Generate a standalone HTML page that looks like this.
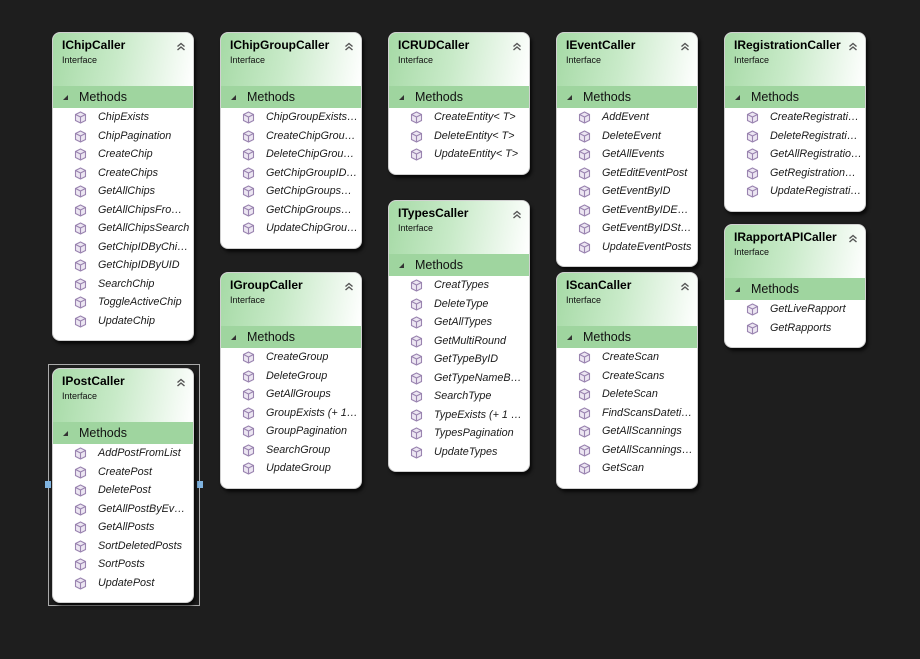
<!DOCTYPE html>
<html><head><meta charset="utf-8"><style>
body{margin:0;width:920px;height:659px;background:#1e1e1e;position:relative;overflow:hidden;font-family:"Liberation Sans",sans-serif}
.c{position:absolute;width:140px;background:#fff;border:1px solid #d0d0d0;border-radius:8px;box-shadow:2px 3px 3px rgba(0,0,0,.7);overflow:hidden;padding-bottom:10px}
.h{height:53px;background:linear-gradient(100deg,#a6daa6 0%,#c8eac8 45%,#ffffff 100%);position:relative}
.t{position:absolute;left:9px;top:5px;font-weight:bold;font-size:12px;color:#000;white-space:nowrap;width:110px;overflow:hidden;text-overflow:ellipsis}
.i{position:absolute;left:9px;top:22px;font-size:9px;color:#111}
.ch{position:absolute;right:7px;top:5px}
.m{height:22px;background:#9fd59f;font-size:12.5px;line-height:22px;color:#111;position:relative;padding-left:26px}
.m:before{content:"";position:absolute;left:10px;top:9px;border-left:5px solid transparent;border-bottom:5px solid #333}
.r{height:18.5px;line-height:18.5px;font-size:10.8px;font-style:italic;color:#1a1a1a;padding-left:45px;position:relative;white-space:nowrap;overflow:hidden;text-overflow:ellipsis;padding-right:3px}
.r svg{position:absolute;left:21px;top:3px}
.sel{position:absolute;left:48px;top:364px;width:150px;height:240px;border:1px solid #aaa}
.hd{position:absolute;width:6px;height:7px;background:#7fb3e0}
</style></head><body>
<div class="sel"></div>
<div class="hd" style="left:45px;top:481px"></div>
<div class="hd" style="left:197px;top:481px"></div>
<script>
const cube='<svg width="13" height="13" viewBox="0 0 13 13"><path d="M6.5 1L11.5 3.5V9.5L6.5 12L1.5 9.5V3.5Z" fill="#ece6f2" stroke="#9a84b0" stroke-width="1.1"/><path d="M1.5 3.5L6.5 6L11.5 3.5M6.5 6V12" fill="none" stroke="#9a84b0" stroke-width="1.1"/></svg>';
const chev='<svg width="10" height="9" viewBox="0 0 10 9"><path d="M1.5 4.5L5 1.5L8.5 4.5M1.5 8L5 5L8.5 8" fill="none" stroke="#555" stroke-width="1.4"/></svg>';
const cards=[
[52,32,"IChipCaller",["ChipExists","ChipPagination","CreateChip","CreateChips","GetAllChips","GetAllChipsFromEvent","GetAllChipsSearch","GetChipIDByChipNr","GetChipIDByUID","SearchChip","ToggleActiveChip","UpdateChip"]],
[220,32,"IChipGroupCaller",["ChipGroupExistsAsync","CreateChipGroupAsync","DeleteChipGroupAsync","GetChipGroupIDByName","GetChipGroupsAsync","GetChipGroupsByEvent","UpdateChipGroupAsync"]],
[388,32,"ICRUDCaller",["CreateEntity< T>","DeleteEntity< T>","UpdateEntity< T>"]],
[556,32,"IEventCaller",["AddEvent","DeleteEvent","GetAllEvents","GetEditEventPost","GetEventByID","GetEventByIDEndPosts","GetEventByIDStartPosts","UpdateEventPosts"]],
[724,32,"IRegistrationCaller",["CreateRegistrations","DeleteRegistrations","GetAllRegistrations","GetRegistrationByID","UpdateRegistrations"]],
[388,200,"ITypesCaller",["CreatTypes","DeleteType","GetAllTypes","GetMultiRound","GetTypeByID","GetTypeNameByID","SearchType","TypeExists (+ 1 overload)","TypesPagination","UpdateTypes"]],
[724,224,"IRapportAPICaller",["GetLiveRapport","GetRapports"]],
[220,272,"IGroupCaller",["CreateGroup","DeleteGroup","GetAllGroups","GroupExists (+ 1 overload)","GroupPagination","SearchGroup","UpdateGroup"]],
[556,272,"IScanCaller",["CreateScan","CreateScans","DeleteScan","FindScansDatetime","GetAllScannings","GetAllScanningsPaged","GetScan"]],
[52,368,"IPostCaller",["AddPostFromList","CreatePost","DeletePost","GetAllPostByEventID","GetAllPosts","SortDeletedPosts","SortPosts","UpdatePost"]]
];
let s='';
for(const [x,y,t,items] of cards){
s+=`<div class="c" style="left:${x}px;top:${y}px"><div class="h"><div class="t">${t}</div><div class="i">Interface</div><div class="ch">${chev}</div></div><div class="m">Methods</div>`;
for(const it of items)s+=`<div class="r">${cube}${it.replace(/</g,'&lt;')}</div>`;
s+='</div>';}
document.write(s);
</script>
</body></html>
